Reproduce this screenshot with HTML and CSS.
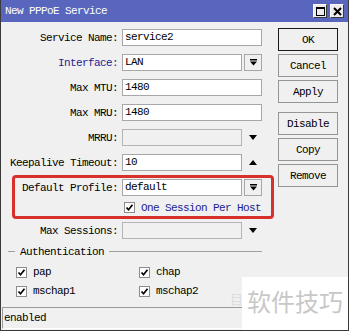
FILE: index.html
```html
<!DOCTYPE html>
<html lang="en">
<head>
  <meta charset="UTF-8">
  <title>New PPPoE Service</title>
  <link rel="stylesheet" href="styles.css">
</head>
<body>
  <div class="window">
    <div class="titlebar">
      <span class="title">New PPPoE Service</span>
      <div class="win-buttons">
        <div class="win-btn">
          <svg width="9" height="9" viewBox="0 0 9 9"><rect x="0.5" y="0.5" width="8" height="8" fill="none" stroke="#000"/><rect x="0" y="0" width="9" height="2"/></svg>
        </div>
        <div class="win-btn">
          <svg width="9" height="9" viewBox="0 0 9 9"><path d="M1 1l7 7M8 1l-7 7" stroke="#000" stroke-width="2"/></svg>
        </div>
      </div>
    </div>

    <div class="main">
      <div class="form">
        <div class="row">
          <span class="label">Service Name:</span>
          <div class="field wide">service2</div>
        </div>
        <div class="row">
          <span class="label link">Interface:</span>
          <div class="field">LAN</div>
          <div class="drop">
            <svg width="7" height="7" viewBox="0 0 7 7"><rect x="0" y="0" width="7" height="1.5"/><path d="M0 2.5h7L3.5 6.5z"/></svg>
          </div>
        </div>
        <div class="row">
          <span class="label">Max MTU:</span>
          <div class="field wide">1480</div>
        </div>
        <div class="row">
          <span class="label">Max MRU:</span>
          <div class="field wide">1480</div>
        </div>
        <div class="row">
          <span class="label">MRRU:</span>
          <div class="field disabled"></div>
          <div class="toggle">
            <svg width="8" height="5" viewBox="0 0 8 5"><path d="M0 0h8L4 5z"/></svg>
          </div>
        </div>
        <div class="row">
          <span class="label">Keepalive Timeout:</span>
          <div class="field">10</div>
          <div class="toggle">
            <svg width="8" height="5" viewBox="0 0 8 5"><path d="M0 5h8L4 0z"/></svg>
          </div>
        </div>
        <div class="row tight">
          <span class="label">Default Profile:</span>
          <div class="field">default</div>
          <div class="drop">
            <svg width="7" height="7" viewBox="0 0 7 7"><rect x="0" y="0" width="7" height="1.5"/><path d="M0 2.5h7L3.5 6.5z"/></svg>
          </div>
        </div>
        <div class="check-row">
          <span class="cb">
            <svg width="9" height="9" viewBox="0 0 9 9"><path d="M1.5 4.5l2 2.2 4-5" stroke="#000" stroke-width="1.7" fill="none"/></svg>
          </span>
          <span class="link">One Session Per Host</span>
        </div>
        <div class="row short">
          <span class="label">Max Sessions:</span>
          <div class="field disabled"></div>
          <div class="toggle">
            <svg width="8" height="5" viewBox="0 0 8 5"><path d="M0 0h8L4 5z"/></svg>
          </div>
        </div>

        <div class="group-head">Authentication</div>
        <div class="auth">
          <div class="auth-item">
            <span class="cb"><svg width="9" height="9" viewBox="0 0 9 9"><path d="M1.5 4.5l2 2.2 4-5" stroke="#000" stroke-width="1.7" fill="none"/></svg></span>
            <span>pap</span>
          </div>
          <div class="auth-item">
            <span class="cb"><svg width="9" height="9" viewBox="0 0 9 9"><path d="M1.5 4.5l2 2.2 4-5" stroke="#000" stroke-width="1.7" fill="none"/></svg></span>
            <span>chap</span>
          </div>
          <div class="auth-item">
            <span class="cb"><svg width="9" height="9" viewBox="0 0 9 9"><path d="M1.5 4.5l2 2.2 4-5" stroke="#000" stroke-width="1.7" fill="none"/></svg></span>
            <span>mschap1</span>
          </div>
          <div class="auth-item">
            <span class="cb"><svg width="9" height="9" viewBox="0 0 9 9"><path d="M1.5 4.5l2 2.2 4-5" stroke="#000" stroke-width="1.7" fill="none"/></svg></span>
            <span>mschap2</span>
          </div>
        </div>
      </div>

      <div class="actions">
        <div class="btn default">OK</div>
        <div class="btn">Cancel</div>
        <div class="btn">Apply</div>
        <div class="btn spaced">Disable</div>
        <div class="btn">Copy</div>
        <div class="btn">Remove</div>
      </div>

      <div class="highlight"></div>
    </div>

    <div class="status">enabled</div>

    <div class="watermark"><span class="wm-logo">目</span>软件技巧</div>
  </div>
</body>
</html>
```

FILE: styles.css
```css
body {
  margin: 0;
  font-family: "Liberation Mono", monospace;
  font-size: 11px;
  letter-spacing: -0.6px;
  color: #000;
  background: #f0f0f0;
}

.window {
  position: relative;
  width: 349px;
  height: 331px;
  box-sizing: border-box;
  border: 1px solid #3a3a3a;
  border-top: none;
  display: flex;
  flex-direction: column;
  background: #f0f0f0;
  overflow: hidden;
}

.titlebar {
  height: 22px;
  background: #5867bd;
  color: #fff;
  display: flex;
  align-items: center;
  justify-content: space-between;
  padding: 0 4px 0 4px;
}

.win-buttons {
  display: flex;
  gap: 3px;
}

.win-btn {
  width: 14px;
  height: 14px;
  box-sizing: border-box;
  background: #ececec;
  border: 1px solid #fafafa;
  border-right-color: #3a3a3a;
  border-bottom-color: #3a3a3a;
  display: flex;
  align-items: center;
  justify-content: center;
}

.main {
  position: relative;
  flex: 1;
  display: flex;
  padding: 7px 0 0 3px;
}

.form {
  width: 258px;
}

.row {
  display: flex;
  align-items: center;
  height: 17px;
  margin-bottom: 8px;
}

.row.tight {
  margin-bottom: 5px;
}

.row.short {
  margin-bottom: 6px;
}

.label {
  width: 114px;
  margin-right: 4px;
  text-align: right;
  white-space: nowrap;
}

.link {
  color: #1c2390;
}

.field {
  width: 120px;
  height: 17px;
  box-sizing: border-box;
  border: 1px solid #a7a7a7;
  background: #fff;
  padding-left: 2px;
  line-height: 15px;
}

.field.wide {
  width: 140px;
}

.field.disabled {
  background: #f0f0f0;
  border-color: #b5b5b5;
}

.drop {
  width: 18px;
  height: 17px;
  margin-left: 2px;
  box-sizing: border-box;
  border: 1px solid #a7a7a7;
  background: #f0f0f0;
  display: flex;
  align-items: center;
  justify-content: center;
}

.toggle {
  width: 18px;
  margin-left: 2px;
  display: flex;
  justify-content: center;
}

.check-row {
  display: flex;
  align-items: center;
  gap: 6px;
  height: 13px;
  margin: 0 0 8px 120px;
}

.cb {
  width: 11px;
  height: 11px;
  box-sizing: border-box;
  border: 1px solid #8c8c8c;
  background: #fff;
  display: flex;
  align-items: center;
  justify-content: center;
}

.group-head {
  display: flex;
  align-items: center;
  gap: 5px;
  height: 13px;
  margin: 0 0 8px 4px;
}

.group-head::before {
  content: '';
  width: 7px;
  border-top: 1px solid #a0a0a0;
}

.group-head::after {
  content: '';
  flex: 1;
  border-top: 1px solid #a0a0a0;
}

.auth {
  display: grid;
  grid-template-columns: 123px 123px;
  row-gap: 7px;
  margin-left: 12px;
}

.auth-item {
  display: flex;
  align-items: center;
  gap: 6px;
  height: 12px;
}

.actions {
  width: 60px;
  margin: -1px 0 0 16px;
  display: flex;
  flex-direction: column;
  gap: 3px;
}

.btn {
  height: 23px;
  box-sizing: border-box;
  border: 1px solid #959595;
  background: #f0f0f0;
  display: flex;
  align-items: center;
  justify-content: center;
}

.btn.default {
  border-color: #1a1a1a;
}

.btn.spaced {
  margin-top: 6px;
}

.highlight {
  position: absolute;
  left: 11px;
  top: 153px;
  width: 262px;
  height: 44px;
  box-sizing: border-box;
  border: 3px solid #d8312c;
  border-radius: 4px;
  pointer-events: none;
}

.status {
  height: 22px;
  box-sizing: border-box;
  margin: 0 1px 1px 1px;
  border: 1px solid #fff;
  border-top-color: #9a9a9a;
  border-left-color: #9a9a9a;
  padding-left: 1px;
  line-height: 20px;
}

.watermark {
  position: absolute;
  right: 0;
  bottom: 0;
  width: 106px;
  height: 53px;
  box-sizing: border-box;
  background: #fff;
  padding: 12px 0 0 5px;
  font-family: "Noto Sans CJK SC", sans-serif;
  font-size: 24px;
  line-height: 24px;
  letter-spacing: 0;
  color: #c8c8c8;
}

.wm-logo {
  position: absolute;
  left: -12px;
  top: 10px;
  font-size: 13px;
  color: #dadde2;
}
```
